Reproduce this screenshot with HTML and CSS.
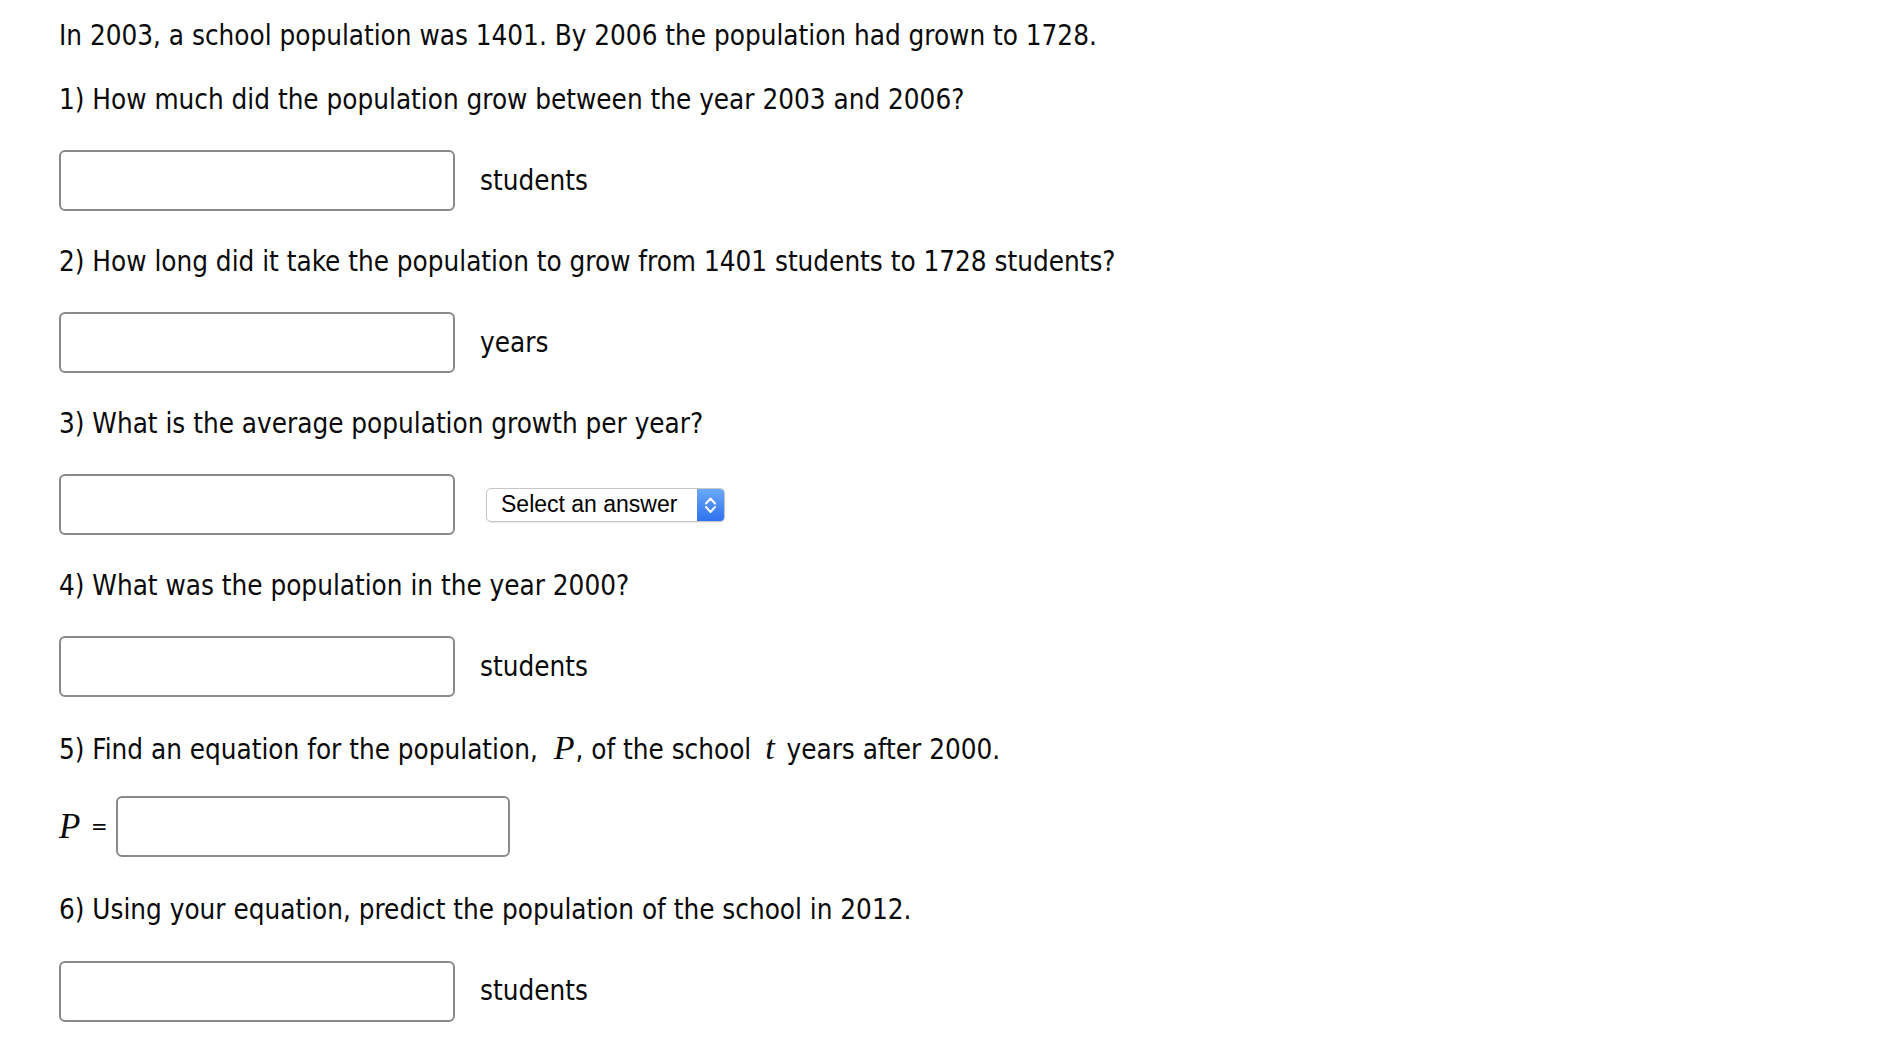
FILE: index.html
```html
<!DOCTYPE html>
<html lang="en">
<head>
<meta charset="utf-8">
<title>School population</title>
<link rel="stylesheet" href="styles.css">
</head>
<body>
<main class="question">
  <p class="intro">In 2003, a school population was 1401. By 2006 the population had grown to 1728.</p>

  <p class="prompt">1) How much did the population grow between the year 2003 and 2006?</p>
  <div class="answer-row">
    <input class="answer" type="text" aria-label="Answer 1">
    <span class="unit">students</span>
  </div>

  <p class="prompt">2) How long did it take the population to grow from 1401 students to 1728 students?</p>
  <div class="answer-row">
    <input class="answer" type="text" aria-label="Answer 2">
    <span class="unit">years</span>
  </div>

  <p class="prompt">3) What is the average population growth per year?</p>
  <div class="answer-row">
    <input class="answer" type="text" aria-label="Answer 3">
    <div class="select-box">
      <span class="select-label">Select an answer</span>
      <span class="select-arrows">
        <svg width="27" height="34" viewBox="0 0 27 34" aria-hidden="true">
          <path d="M9 15.5 L13.5 10.5 L18 15.5" fill="none" stroke="#fff" stroke-width="2" stroke-linecap="round" stroke-linejoin="round"/>
          <path d="M9 19 L13.5 24 L18 19" fill="none" stroke="#fff" stroke-width="2" stroke-linecap="round" stroke-linejoin="round"/>
        </svg>
      </span>
    </div>
  </div>

  <p class="prompt">4) What was the population in the year 2000?</p>
  <div class="answer-row">
    <input class="answer" type="text" aria-label="Answer 4">
    <span class="unit">students</span>
  </div>

  <p class="prompt">5) Find an equation for the population, <span class="math math-p">P</span>, of the school <span class="math math-t">t</span> years after 2000.</p>
  <div class="answer-row equation-row">
    <span class="math math-lhs">P</span>
    <span class="equals">=</span>
    <input class="answer answer-eq" type="text" aria-label="Answer 5">
  </div>

  <p class="prompt">6) Using your equation, predict the population of the school in 2012.</p>
  <div class="answer-row">
    <input class="answer" type="text" aria-label="Answer 6">
    <span class="unit">students</span>
  </div>
</main>
</body>
</html>
```
FILE: styles.css
```css
html, body {
  margin: 0;
  padding: 0;
  background: #ffffff;
}

body {
  font-family: "DejaVu Sans Condensed", "Open Sans", "DejaVu Sans", sans-serif;
  font-size: 27.6px;
  color: #0a0a0a;
}

.question {
  padding: 19.5px 0 0 59px;
}

.intro,
.prompt {
  margin: 0;
  line-height: 32px;
  white-space: nowrap;
}

.intro {
  margin-bottom: 32px;
}

.prompt {
  margin-bottom: 34.5px;
}

.answer-row {
  display: flex;
  align-items: center;
  height: 61px;
  margin-bottom: 34.5px;
}

.answer {
  box-sizing: border-box;
  width: 396px;
  height: 61px;
  margin: 0;
  padding: 0 10px;
  border: 2px solid #8a8a8a;
  border-radius: 6px;
  background: #ffffff;
  font: inherit;
  outline: none;
}

.unit {
  margin-left: 25px;
  line-height: 32px;
}

.math {
  font-family: "Liberation Serif", "DejaVu Serif", serif;
  font-style: italic;
  font-size: 34px;
  line-height: 32px;
}

.math-p {
  padding: 0 1px 0 8px;
}

.math-t {
  padding: 0 4px 0 6px;
}

.equation-row {
  margin-top: -4px;
  margin-bottom: 37px;
}

.math-lhs {
  font-size: 35px;
  width: 30px;
}

.equals {
  font-size: 22px;
  margin-left: 2px;
  margin-right: 8px;
}

.answer-eq {
  width: 394px;
}

.select-box {
  box-sizing: border-box;
  display: flex;
  align-items: stretch;
  width: 239px;
  height: 34px;
  margin-left: 31px;
  border: 1px solid #c6c6c6;
  border-radius: 5px;
  background: #ffffff;
  box-shadow: 0 1px 1px rgba(0, 0, 0, 0.08);
  overflow: hidden;
}

.select-label {
  flex: 1;
  display: flex;
  align-items: center;
  padding-left: 14px;
  font-family: "Liberation Sans", Arial, sans-serif;
  font-size: 23px;
  color: #000000;
}

.select-arrows {
  display: flex;
  width: 27px;
  background: linear-gradient(to bottom, #6aa9fb, #2f72ee);
}

.select-arrows svg {
  display: block;
  margin-top: -1px;
}
```
